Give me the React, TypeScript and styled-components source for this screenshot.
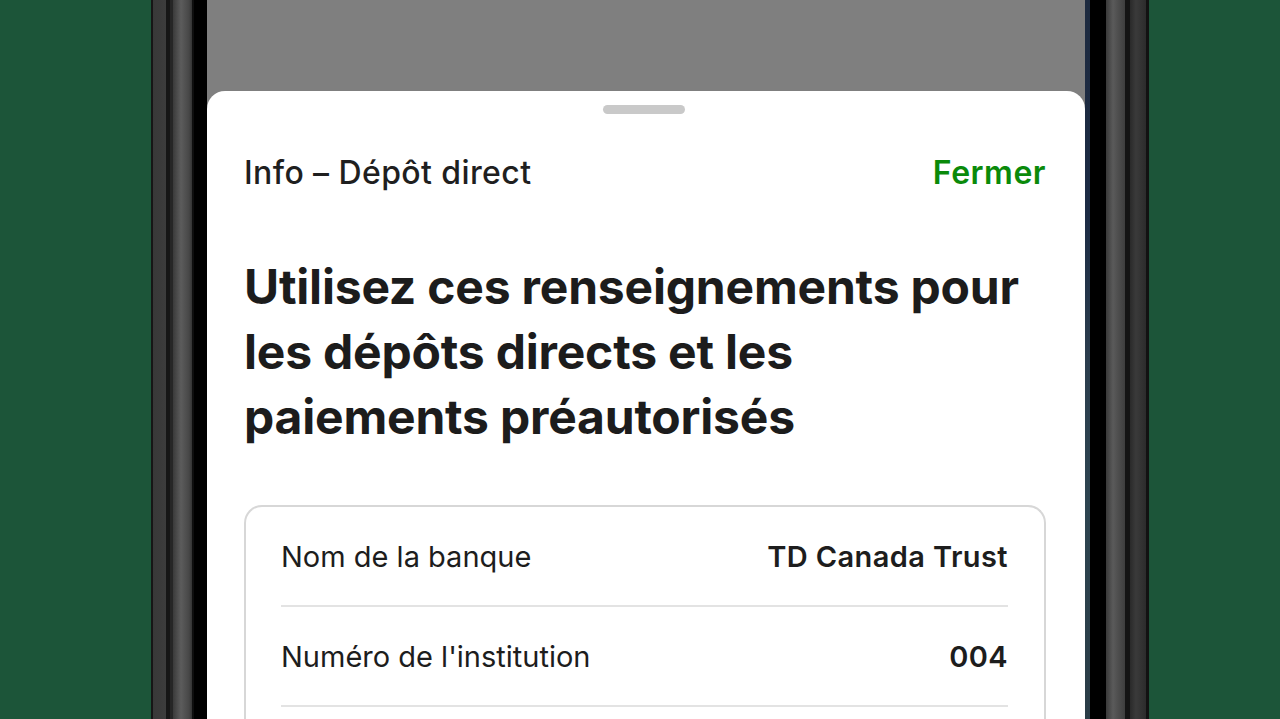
import React from "react";
import styled, { createGlobalStyle } from "styled-components";

const Global = createGlobalStyle`
  html, body { margin: 0; padding: 0; }
  body {
    background: #1c5539;
    font-family: Inter, "Noto Sans", "Liberation Sans", sans-serif;
    -webkit-font-smoothing: antialiased;
  }
`;

const Page = styled.div`
  width: 1280px;
  height: 719px;
  overflow: hidden;
  background: #1c5539;
  padding-left: 151px;
  box-sizing: border-box;
  display: flex;
  align-items: stretch;
`;

const Phone = styled.div`
  width: 998px;
  height: 719px;
  box-sizing: border-box;
  padding-left: 56px;
  padding-right: 59px;
  display: flex;
  background: linear-gradient(
    to right,
    #161616 0px, #161616 2px,
    #383838 2px, #3c3c3c 15px,
    #161616 15px, #161616 19px,
    #262626 19px, #262626 22px,
    #3a3a3a 22px, #5c5c5c 30px, #474747 38px, #333 41px,
    #0e0e0e 41px, #0e0e0e 43px,
    #000 43px, #000 56px,
    #000 939px, #000 955px,
    #3a3a3a 955px, #5a5a5a 962px, #3e3e3e 974px,
    #141414 974px, #141414 979px,
    #2a2a2a 979px, #3a3a3a 985px, #2c2c2c 995px,
    #121212 995px, #121212 998px
  );
`;

const Screen = styled.div`
  flex: 1;
  display: flex;
  overflow: hidden;
`;

const Stage = styled.div`
  width: 878px;
  display: flex;
  flex-direction: column;
  background: #7f7f7f;
  padding-top: 91px;
  box-sizing: border-box;
`;

const EdgeStrip = styled.div`
  width: 5px;
  background: linear-gradient(
    to bottom,
    #1d2a3f 0%, #1c2b44 30%, #2b3d4d 50%, #2d4450 70%, #2a3c46 100%
  );
`;

const Sheet = styled.div`
  flex: 1;
  background: #ffffff;
  border-radius: 18px 18px 0 0;
  padding: 14px 39px 0 37px;
  display: flex;
  flex-direction: column;
`;

const Handle = styled.div`
  align-self: center;
  width: 82px;
  height: 9px;
  border-radius: 5px;
  background: #c9c9c9;
  margin-left: -2px;
`;

const HeaderRow = styled.div`
  margin-top: 40px;
  display: flex;
  justify-content: space-between;
  align-items: center;
  height: 36px;
`;

const HeaderTitle = styled.div`
  font-size: 32px;
  font-weight: 500;
  color: #1f1f1f;
  letter-spacing: 0.4px;
`;

const CloseLink = styled.button`
  background: none;
  border: none;
  padding: 0;
  font-family: inherit;
  font-size: 32px;
  font-weight: 600;
  color: #0a8a0a;
  letter-spacing: 0.5px;
  cursor: pointer;
`;

const Title = styled.h1`
  margin: 64px 0 0 0;
  font-size: 48px;
  line-height: 65px;
  font-weight: 700;
  color: #1c1c1c;
  letter-spacing: -0.2px;
`;

const Card = styled.div`
  flex: 1;
  margin-top: 56px;
  border: 2px solid #d7d7d7;
  border-bottom: none;
  border-radius: 18px 18px 0 0;
  padding: 0 36px 0 35px;
`;

const Row = styled.div`
  height: 98px;
  display: flex;
  justify-content: space-between;
  align-items: center;
  border-bottom: 2px solid #e3e3e3;
`;

const Label = styled.span`
  font-size: 29px;
  font-weight: 400;
  color: #1d1d1d;
  letter-spacing: 0px;
`;

const Value = styled.span`
  font-size: 29px;
  font-weight: 600;
  color: #1d1d1d;
  letter-spacing: 0.4px;
`;

const rows = [
  { label: "Nom de la banque", value: "TD Canada Trust" },
  { label: "Numéro de l'institution", value: "004" },
];

export default function App() {
  return (
    <>
      <Global />
      <Page>
        <Phone>
          <Screen>
            <Stage>
              <Sheet>
                <Handle />
                <HeaderRow>
                  <HeaderTitle>Info – Dépôt direct</HeaderTitle>
                  <CloseLink>Fermer</CloseLink>
                </HeaderRow>
                <Title>
                  Utilisez ces renseignements pour les dépôts directs et les
                  paiements préautorisés
                </Title>
                <Card>
                  {rows.map((r) => (
                    <Row key={r.label}>
                      <Label>{r.label}</Label>
                      <Value>{r.value}</Value>
                    </Row>
                  ))}
                </Card>
              </Sheet>
            </Stage>
            <EdgeStrip />
          </Screen>
        </Phone>
      </Page>
    </>
  );
}
